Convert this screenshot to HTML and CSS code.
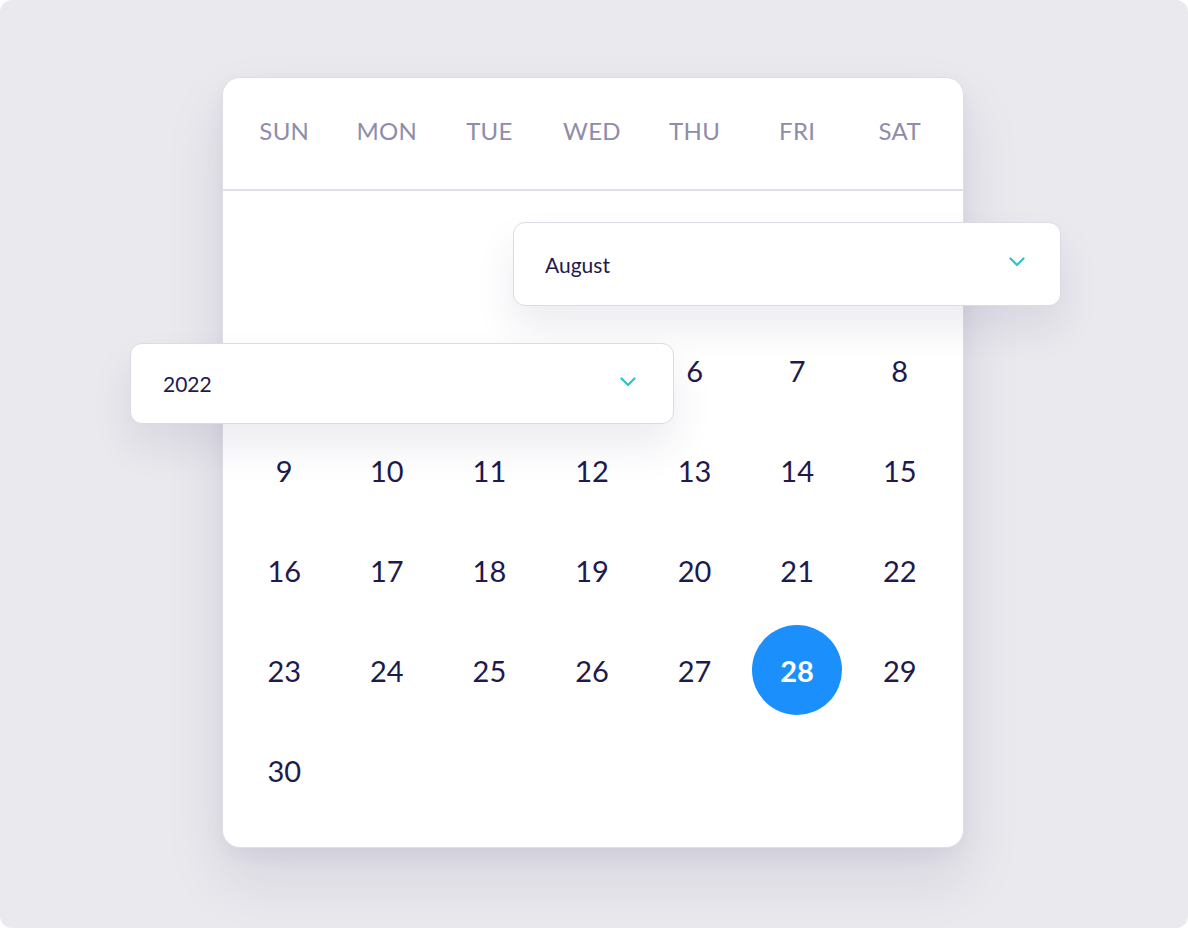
FILE: index.html
```html
<!DOCTYPE html>
<html>
<head>
<meta charset="utf-8">
<link rel="stylesheet" href="styles.css">
</head>
<body>
<div class="stage">
  <div class="card">
    <div class="week">
      <span>SUN</span><span>MON</span><span>TUE</span><span>WED</span><span>THU</span><span>FRI</span><span>SAT</span>
    </div>
    <div class="days">
      <span></span><span></span><span></span><span></span><span></span><span></span><span>1</span>
      <span>2</span><span>3</span><span>4</span><span>5</span><span>6</span><span>7</span><span>8</span>
      <span>9</span><span>10</span><span>11</span><span>12</span><span>13</span><span>14</span><span>15</span>
      <span>16</span><span>17</span><span>18</span><span>19</span><span>20</span><span>21</span><span>22</span>
      <span>23</span><span>24</span><span>25</span><span>26</span><span>27</span><span><b class="sel">28</b></span><span>29</span>
      <span>30</span><span></span><span></span><span></span><span></span><span></span><span></span>
    </div>
  </div>
  <div class="select select-month">
    <span class="label">August</span>
    <svg class="chev" width="16" height="10" viewBox="0 0 16 10"><path d="M1.5 1.5 L8 8 L14.5 1.5" fill="none" stroke="#2bc4c9" stroke-width="2.2" stroke-linecap="round" stroke-linejoin="round"/></svg>
  </div>
  <div class="select select-year">
    <span class="label">2022</span>
    <svg class="chev" width="16" height="10" viewBox="0 0 16 10"><path d="M1.5 1.5 L8 8 L14.5 1.5" fill="none" stroke="#2bc4c9" stroke-width="2.2" stroke-linecap="round" stroke-linejoin="round"/></svg>
  </div>
</div>
</body>
</html>
```

FILE: styles.css
```css
html, body {
  margin: 0;
  padding: 0;
  background: #ffffff;
}
body {
  font-family: "Lato", "Open Sans", sans-serif;
}
.stage {
  position: relative;
  width: 1188px;
  height: 928px;
  background: #eae9ee;
  border-radius: 12px;
  padding: 77px 0 0 222px;
  box-sizing: border-box;
  overflow: hidden;
}
.card {
  width: 742px;
  height: 771px;
  box-sizing: border-box;
  background: #ffffff;
  border: 1px solid #dfdde6;
  border-radius: 18px;
  box-shadow: 0 30px 60px rgba(40, 30, 90, 0.10), 0 8px 20px rgba(40, 30, 90, 0.05);
}
.week {
  height: 111px;
  border-bottom: 2px solid #e1dfe8;
  display: grid;
  grid-template-columns: repeat(7, 1fr);
  padding: 0 12px 0 10px;
  align-items: center;
}
.week span {
  text-align: center;
  color: #8f8cab;
  font-size: 24px;
  letter-spacing: 0.3px;
  padding-bottom: 6px;
}
.days {
  display: grid;
  grid-template-columns: repeat(7, 1fr);
  grid-auto-rows: 100px;
  padding: 29px 12px 0 10px;
}
.days span {
  display: flex;
  align-items: center;
  justify-content: center;
  color: #1e1a4d;
  font-size: 29px;
}
.sel {
  width: 90px;
  height: 90px;
  border-radius: 50%;
  background: #1b90fd;
  color: #ffffff;
  font-weight: 700;
  display: flex;
  align-items: center;
  justify-content: center;
  font-size: 29px;
}
.select {
  position: absolute;
  box-sizing: border-box;
  background: #ffffff;
  border: 1px solid #dcdae4;
  border-radius: 12px;
  display: flex;
  align-items: center;
  justify-content: space-between;
  box-shadow: 0 22px 40px rgba(40, 30, 90, 0.09);
}
.select .label {
  color: #1e1a4d;
  font-size: 21px;
}
.select-month {
  left: 513px;
  top: 222px;
  width: 548px;
  height: 84px;
  padding: 0 35px 0 31px;
}
.select-year {
  left: 130px;
  top: 343px;
  width: 544px;
  height: 81px;
  padding: 0 37px 0 32px;
}
.chev {
  display: block;
  margin-top: -4px;
}
```
